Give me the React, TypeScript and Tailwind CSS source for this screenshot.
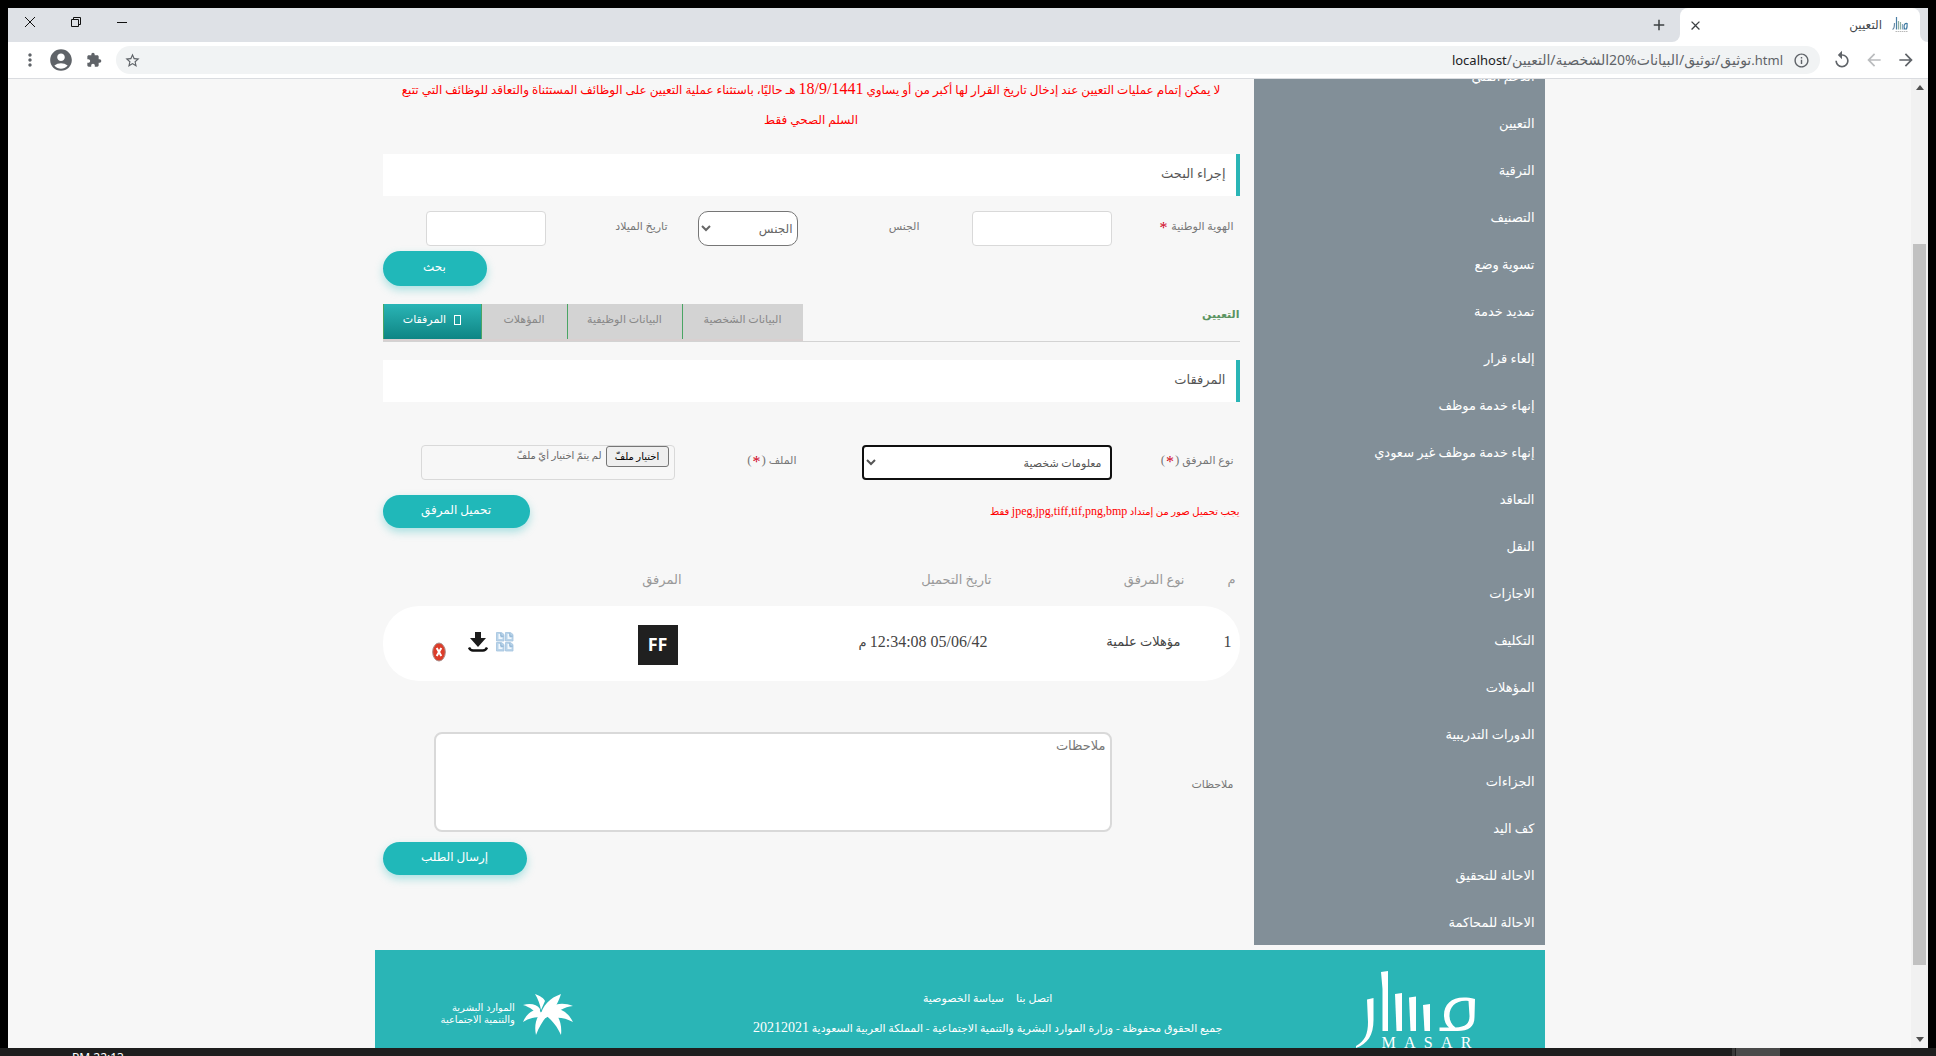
import { useRef } from "react";
import type { ReactNode } from "react";
import {
  MdAccountCircle,
  MdAdd,
  MdArrowBack,
  MdArrowForward,
  MdClose,
  MdExtension,
  MdInfoOutline,
  MdMoreVert,
  MdReplay,
  MdStarBorder,
} from "react-icons/md";

const menuItems = [
  "الدعم الفني",
  "التعيين",
  "الترقية",
  "التصنيف",
  "تسوية وضع",
  "تمديد خدمة",
  "إلغاء قرار",
  "إنهاء خدمة موظف",
  "إنهاء خدمة موظف غير سعودي",
  "التعاقد",
  "النقل",
  "الاجازات",
  "التكليف",
  "المؤهلات",
  "الدورات التدريبية",
  "الجزاءات",
  "كف اليد",
  "الاحالة للتحقيق",
  "الاحالة للمحاكمة",
];

const urlParts = ["/", "التعيين", "/", "الشخصية", "20%", "البيانات", "/", "توثيق", "/", "توثيق"];

function MasarFavicon() {
  return (
    <svg width="16" height="16" viewBox="0 0 16 16" fill="none" strokeWidth="1.2">
      <path d="M.5 12.500c1.500-.5 2-2 2-6.500" stroke="#6d8ea8" />
      <path d="M4.500 0v12.500" stroke="#4a7fa5" />
      <path d="M6.500 4v8.500M8.500 5v7.500" stroke="#8fb0a4" />
      <path d="M10.500 7v5.500" stroke="#8aa9bf" />
      <path d="M11.500 12h3c.8-2 .7-4 .6-5.500-2-.4-3.200 1-3 3.500 0 1 .3 1.500.8 2" stroke="#3f7ba3" />
      <path d="M3.500 14.500h12" stroke="#b9b9b9" strokeDasharray="1.500 .6" />
    </svg>
  );
}

function BrowserChrome() {
  return (
    <header className="shrink-0">
      <div className="flex h-[34px] items-stretch bg-[#dee1e6]">
        <div className="w-2 bg-white">
          <div className="h-full rounded-bl-lg bg-[#dee1e6]" />
        </div>
        <div className="flex w-[240px] items-center rounded-t-lg bg-white pr-3 pl-2">
          <MasarFavicon />
          <span className="mr-2.5 flex-1 font-['Noto_Sans','DejaVu_Sans',sans-serif] text-xs text-[#45494d]">التعيين</span>
          <button type="button" aria-label="إغلاق علامة التبويب">
            <MdClose size={15} color="#3c4043" />
          </button>
        </div>
        <div className="w-2 bg-white">
          <div className="h-full rounded-br-lg bg-[#dee1e6]" />
        </div>
        <button type="button" aria-label="علامة تبويب جديدة" className="mr-1">
          <MdAdd size={18} color="#3c4043" />
        </button>
        <div className="mr-auto flex items-center gap-9 pb-1.5 pl-[17px]">
          <button type="button" aria-label="تصغير">
            <svg width="10" height="12" viewBox="0 0 10 12"><path d="M0 6.500h10" stroke="#111" /></svg>
          </button>
          <button type="button" aria-label="استعادة">
            <svg width="10" height="10" viewBox="0 0 10 10" fill="none" stroke="#111"><path d="M.5 2.500h7v7h-7zM2.500 2.500v-2h7v7h-2" /></svg>
          </button>
          <button type="button" aria-label="إغلاق">
            <svg width="10" height="10" viewBox="0 0 10 10"><path d="M0 0l10 10M10 0L0 10" stroke="#111" /></svg>
          </button>
        </div>
      </div>
      <div className="flex h-[37px] items-center border-b border-[#dadce0] bg-white px-3">
        <button type="button" aria-label="إلى الأمام"><MdArrowForward size={20} color="#5f6368" /></button>
        <button type="button" aria-label="رجوع" className="mr-3"><MdArrowBack size={20} color="#babcbe" /></button>
        <button type="button" aria-label="إعادة تحميل" className="mr-3"><MdReplay size={20} color="#5f6368" /></button>
        <div className="mr-3 flex h-7 flex-1 items-center rounded-full bg-[#f1f3f4] pr-2.5 pl-2">
          <MdInfoOutline size={17} color="#5f6368" />
          <div dir="ltr" className="mr-2.5 flex items-baseline font-['Noto_Sans','DejaVu_Sans',sans-serif] text-sm text-[#5f6368]">
            <span className="text-[13px] text-[#202124]">localhost</span>
            {urlParts.map((p, i) => (
              <span key={i}>{p}</span>
            ))}
            <span className="text-[13px]">.html</span>
          </div>
          <button type="button" aria-label="إضافة إشارة" className="mr-auto"><MdStarBorder size={17} color="#5f6368" /></button>
        </div>
        <button type="button" aria-label="الإضافات" className="mr-3.5"><MdExtension size={16} color="#5f6368" /></button>
        <button type="button" aria-label="الحساب" className="mr-3"><MdAccountCircle size={26} color="#5f6368" /></button>
        <button type="button" aria-label="القائمة" className="mr-2"><MdMoreVert size={20} color="#5f6368" /></button>
      </div>
    </header>
  );
}

function SectionTitle({ children }: { children: ReactNode }) {
  return (
    <h2 className="flex h-[42px] items-center border-r-4 border-[#2ab5b6] bg-white pr-2.5 pb-0.5 text-[13px] text-[#555]">
      {children}
    </h2>
  );
}

function PillButton({ children, className }: { children: ReactNode; className: string }) {
  return (
    <button
      type="button"
      className={`rounded-full bg-[#20b8b9] pb-1 text-xs text-white shadow-[0_4px_8px_rgba(32,184,185,0.35)] ${className}`}
    >
      {children}
    </button>
  );
}

function Label({ htmlFor, children, className = "pb-1" }: { htmlFor: string; children: ReactNode; className?: string }) {
  return (
    <label htmlFor={htmlFor} className={`w-[122px] shrink-0 text-[11px] text-[#777] ${className}`}>
      {children}
    </label>
  );
}

function Star() {
  return <span className="mx-px align-[-3px] text-base leading-none text-[#d0021b]">*</span>;
}

function RequiredMark() {
  return (
    <span className="text-[13px] leading-none">
      (<Star />)
    </span>
  );
}

function Tabs() {
  const plain = "border-l border-[#4aa564] bg-[#d3d3d3] pb-1 text-[#888]";
  return (
    <div className="mt-[18px] flex items-start border-b border-[#d3d3d3]">
      <h1 className="text-[11px] leading-5 font-bold text-[#5a9461]">التعيين</h1>
      <div role="tablist" className="mr-auto flex h-[37px] border-b-2 border-[#d8d0d0] text-[11px]">
        <button type="button" role="tab" className={`w-[121px] ${plain}`}>البيانات الشخصية</button>
        <button type="button" role="tab" className={`w-[115px] ${plain}`}>البيانات الوظيفية</button>
        <button type="button" role="tab" className={`w-[86px] ${plain}`}>المؤهلات</button>
        <button
          type="button"
          role="tab"
          aria-selected="true"
          className="flex w-[98px] items-center justify-center gap-2 border-l border-[#4aa564] bg-linear-to-b from-[#2ab5b6] to-[#0e8584] pb-1 text-white"
        >
          <span className="h-2.5 w-[7px] border border-white" />
          المرفقات
        </button>
      </div>
    </div>
  );
}

function GridIcon() {
  return (
    <svg width="18" height="20" viewBox="0 0 18 20">
      {[[0, 0], [9, 0], [0, 10], [9, 10]].map(([x, y]) => (
        <g key={`${x}-${y}`} transform={`translate(${x} ${y})`}>
          <path d="M.5.5h5l2.500 2v6.500h-7.500z" fill="#b9d4ea" stroke="#a3c3de" strokeWidth=".8" />
          <path d="M2.500 2h2v3.500h2v1.500h-4z" fill="#f2f8fd" />
          <path d="M4.800 1.200v3h2.700" fill="none" stroke="#7fa8cb" strokeWidth=".8" />
        </g>
      ))}
    </svg>
  );
}

function DownloadIcon() {
  return (
    <svg width="20" height="20" viewBox="0 0 20 20">
      <path d="M7 0h6v6h5l-8 9-8-9h5z" fill="#1c1c1c" />
      <path d="M1 15.500c1 2.500 2 3 4 3h10c2 0 3-.5 4-3" fill="none" stroke="#111" strokeWidth="2.400" />
    </svg>
  );
}

function DeleteIcon() {
  return (
    <svg width="14" height="20" viewBox="0 0 14 20">
      <ellipse cx="7" cy="10" rx="6.300" ry="9" fill="#dc3d2a" stroke="#a98a86" />
      <path d="M4.700 6l4.600 8M9.300 6l-4.600 8" stroke="#fff" strokeWidth="2" />
    </svg>
  );
}

function AttachmentsTable() {
  return (
    <table className="mt-[38px] w-full table-fixed border-separate border-spacing-0 text-right">
      <thead>
        <tr className="h-10 text-[13px] text-[#999]">
          <th className="w-[51px] pr-1 pb-3 font-normal">م</th>
          <th className="w-[193px] pr-1 pb-3 font-normal">نوع المرفق</th>
          <th className="w-[310px] pr-1 pb-3 font-normal">تاريخ التحميل</th>
          <th className="w-[150px] pr-1 pb-3 font-normal">المرفق</th>
          <th />
        </tr>
      </thead>
      <tbody>
        <tr className="h-[75px] bg-white text-[13px] text-[#444]">
          <td className="rounded-r-[36px] pr-2 pb-1 text-base">1</td>
          <td className="pr-2 pb-1">مؤهلات علمية</td>
          <td className="pr-2 pb-1"><bdi dir="ltr" className="text-base">12:34:08 05/06/42</bdi> م</td>
          <td className="pt-0.5 pr-2">
            <div className="flex size-10 items-center justify-center bg-[#202020] pb-0.5 font-['Noto_Sans',sans-serif] text-lg font-bold text-white">FF</div>
          </td>
          <td className="rounded-l-[36px] pr-[22px]">
            <div className="flex items-center">
              <button type="button" aria-label="عرض" className="-mt-1"><GridIcon /></button>
              <button type="button" aria-label="تنزيل" className="-mt-1 mr-2"><DownloadIcon /></button>
              <button type="button" aria-label="حذف" className="mt-4 mr-[22px]"><DeleteIcon /></button>
            </div>
          </td>
        </tr>
      </tbody>
    </table>
  );
}

function MainPanel() {
  const fileRef = useRef<HTMLInputElement>(null);
  return (
    <main className="min-w-0 flex-1 pr-[14px] pl-2">
      <p className="-mt-1 text-center text-xs leading-[30px] text-[#ff0000]">
        لا يمكن إتمام عمليات التعيين عند إدخال تاريخ القرار لها أكبر من أو يساوي <span className="text-base leading-none">18/9/1441</span> هـ حاليًا، باستثناء عملية التعيين على الوظائف المستثناة والتعاقد للوظائف التي تتبع{" "}
        <span className="whitespace-nowrap">السلم الصحي فقط</span>
      </p>
      <div className="mt-[19px]">
        <SectionTitle>إجراء البحث</SectionTitle>
      </div>
      <div className="mt-[15px] flex h-[35px] items-center pr-1.5">
        <Label htmlFor="nid">الهوية الوطنية <Star /></Label>
        <input id="nid" className="h-full w-[140px] rounded border border-[#d9d9d9] bg-white px-2" />
        <Label htmlFor="gender" className="mr-[52px] pb-1">الجنس</Label>
        <select id="gender" className="h-full w-[100px] rounded-[10px] border border-[#767676] bg-white text-xs text-[#666]">
          <option>الجنس</option>
        </select>
        <Label htmlFor="birth" className="mr-[30px] pb-1">تاريخ الميلاد</Label>
        <input id="birth" className="h-full w-[120px] rounded border border-[#d9d9d9] bg-white px-2" />
      </div>
      <div className="mt-[5px] flex justify-end">
        <PillButton className="h-[35px] w-[104px]">بحث</PillButton>
      </div>
      <Tabs />
      <div className="mt-[18px]">
        <SectionTitle>المرفقات</SectionTitle>
      </div>
      <div className="mt-[43px] flex h-[35px] items-center pr-1.5">
        <Label htmlFor="kind">نوع المرفق <RequiredMark /></Label>
        <select id="kind" className="h-full w-[250px] rounded border-2 border-[#101010] bg-white pr-1 text-[11px] text-[#555]">
          <option>معلومات شخصية</option>
        </select>
        <Label htmlFor="file" className="mr-[65px] pb-1">الملف <RequiredMark /></Label>
        <div className="flex h-full w-[254px] items-start rounded border border-[#d9d9d9] pr-[5px] text-[10px] text-[#666]">
          <input id="file" ref={fileRef} type="file" className="hidden" />
          <button
            type="button"
            onClick={() => fileRef.current?.click()}
            className="h-[21px] w-[63px] rounded-[3px] border border-[#767676] bg-[#efefef] text-black"
          >
            اختيار ملفّ
          </button>
          <span className="mr-1 leading-5">لم يتمّ اختيار أيّ ملفّ</span>
        </div>
      </div>
      <div className="mt-[15px] flex h-[33px] items-center justify-between">
        <p className="pb-0.5 text-[10px] text-[#ff0000]">
          يجب تحميل صور من إمتداد <span className="text-xs">jpeg,jpg,tiff,tif,png,bmp</span> فقط
        </p>
        <PillButton className="h-[33px] w-[147px]">تحميل المرفق</PillButton>
      </div>
      <AttachmentsTable />
      <div className="mt-[51px] flex items-center pr-1.5">
        <Label htmlFor="notes" className="pt-1">ملاحظات</Label>
        <textarea
          id="notes"
          placeholder="ملاحظات"
          className="ml-[51px] h-[100px] min-w-0 flex-1 resize-none rounded-lg border-2 border-[#d9d9d9] bg-white px-1 py-0.5 text-[13px] placeholder:text-[#777]"
        />
      </div>
      <div className="mt-2.5 flex justify-end">
        <PillButton className="h-[33px] w-36">إرسال الطلب</PillButton>
      </div>
    </main>
  );
}

function MasarLogo() {
  return (
    <div className="w-[120px] text-white">
      <svg width="120" height="78" viewBox="0 0 120 78" fill="currentColor">
        <path d="M12 29.500l6.500-1.500v22c0 15-6 24-17.500 28v-2c9-5 12-12 12-24z" />
        <path d="M26 2l7-1v60h-5.500v-42z" />
        <path d="M40 24l7-1v38h-5.500z" />
        <path d="M54 27.500l7-1v34.500h-5.500z" />
        <path d="M68 35l7-1v27h-5.500z" />
        <path d="M120 29c-20-5-31 3-31 16 0 6 2 10 5 12.500h-9.500v3.500h18c11 0 17-4 17-14zm-6.500 2l1 15c0 8-4 11-14 11.500-4-3-6-7-6-12 0-9 7-16 19-14.500z" fillRule="evenodd" />
      </svg>
      <div className="-mt-[15px] mr-[3px] ml-[27px] flex justify-between text-base leading-5" dir="ltr">
        <span>M</span><span>A</span><span>S</span><span>A</span><span>R</span>
      </div>
    </div>
  );
}

function MinistryLogo() {
  return (
    <div className="flex items-center gap-2 text-white">
      <svg width="50" height="42" viewBox="0 0 50 42" fill="currentColor">
        <path d="M12 0c5 2 9 4 10 7l-4 9c-1-6-3-11-6-16z" />
        <path d="M38 0c-11 4-19 11-21 24l6 0c3-3 6-6 8-9 3-5 5-9 7-15z" />
        <path d="M0 11c7-2 14-1 17 4l-1 8c-4-6-9-10-16-12z" />
        <path d="M0 28c3-7 8-12 16-13l4 8c-8 0-14 1-20 5z" />
        <path d="M50 12c-8-3-16-3-22 1l-5 9 6 2c5-7 12-11 21-12z" />
        <path d="M50 28c-3-6-8-12-16-13l-10 5 5 4c8-1 14 0 21 4z" />
        <path d="M13 41c-2-9 0-17 5-23l8 2c-6 6-10 13-13 21z" />
        <path d="M38 41c1-9-1-17-7-24l-9 4c7 5 12 11 16 20z" />
      </svg>
      <p className="pb-1 font-['Noto_Sans','DejaVu_Sans',sans-serif] text-[10px] leading-3">
        الموارد البشرية
        <br />
        والتنمية الاجتماعية
      </p>
    </div>
  );
}

function Footer() {
  return (
    <footer className="mt-[5px] flex h-[140px] items-start justify-between bg-[#2ab5b6] pr-[70px] pl-[66px] text-white">
      <div className="pt-5"><MasarLogo /></div>
      <div className="ml-12 pt-[33px] text-center text-[11px] leading-[30px]">
        <nav className="flex justify-center gap-3">
          <a href="#contact">اتصل بنا</a>
          <a href="#privacy">سياسة الخصوصية</a>
        </nav>
        <p>
          جميع الحقوق محفوظة - وزارة الموارد البشرية والتنمية الاجتماعية - المملكة العربية السعودية <span className="text-sm leading-none">20212021</span>
        </p>
      </div>
      <div className="pt-11"><MinistryLogo /></div>
    </footer>
  );
}

export default function App() {
  return (
    <div dir="rtl" className="flex h-screen flex-col overflow-hidden bg-black pt-2 font-['Liberation_Serif','DejaVu_Sans',serif]">
      <div className="mx-2 flex min-h-0 flex-1 flex-col">
        <BrowserChrome />
        <div className="flex min-h-0 flex-1 bg-[#f7f7f7]">
          <div className="flex w-[17px] shrink-0 flex-col items-center bg-[#f1f1f1] py-1.5">
            <svg width="8" height="5" viewBox="0 0 8 5"><path d="M0 5l4-5 4 5z" fill="#505050" /></svg>
            <div className="mt-[154px] mb-[72px] w-[13px] flex-1 bg-[#c1c1c1]" />
            <svg width="8" height="5" viewBox="0 0 8 5"><path d="M0 0l4 5 4-5z" fill="#505050" /></svg>
          </div>
          <div className="min-w-0 flex-1 overflow-hidden">
            <div className="mx-auto max-w-[1170px]">
              <div className="flex items-start">
                <aside className="-mt-[27px] w-[291px] shrink-0 bg-[#828f98]">
                  <ul>
                    {menuItems.map((item) => (
                      <li key={item}>
                        <a href="#menu" className="flex h-[47px] items-center pt-0.5 pr-2.5 text-[13px] text-white">{item}</a>
                      </li>
                    ))}
                  </ul>
                </aside>
                <MainPanel />
              </div>
              <Footer />
            </div>
          </div>
        </div>
      </div>
      <div className="flex h-2 shrink-0 overflow-hidden bg-[#1e1e1e]">
        <div className="mr-[156px] h-full w-11 bg-[#4a4a4a]" />
        <div className="mr-px h-full w-[3px] bg-[#3a3a3a]" />
        <span className="mt-1 mr-auto ml-[72px] font-['Noto_Sans',sans-serif] text-xs leading-3 text-white" dir="ltr">PM 22:13</span>
      </div>
    </div>
  );
}
